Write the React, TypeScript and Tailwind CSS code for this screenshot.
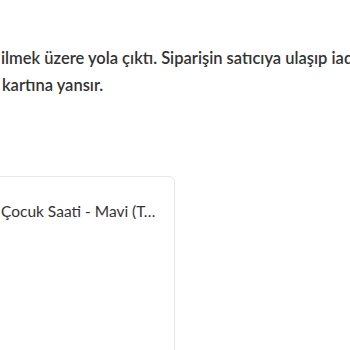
export default function App() {
  return (
    <div
      className="relative w-[350px] h-[350px] overflow-hidden bg-white text-[#333]"
      style={{ fontFamily: "Lato, 'Open Sans', sans-serif" }}
    >
      <div className="pt-[45px] pl-[1px] text-[16.5px] font-semibold leading-[27px] whitespace-nowrap">
        <div>ilmek üzere yola çıktı. Siparişin satıcıya ulaşıp iade</div>
        <div className="pl-[1px]">kartına yansır.</div>
      </div>
      <div className="mt-[77px] ml-[-200px] w-[375px] h-[220px] rounded-[6px] border border-[#e8e8e8] bg-white shadow-[0_1px_3px_rgba(0,0,0,0.04)] pl-[200px] pr-[14px] pt-[24px]">
        <div className="truncate text-[15.5px] leading-[20px] text-[#333]">
          Çocuk Saati - Mavi (Turuncu Kayışlı)
        </div>
      </div>
    </div>
  );
}
